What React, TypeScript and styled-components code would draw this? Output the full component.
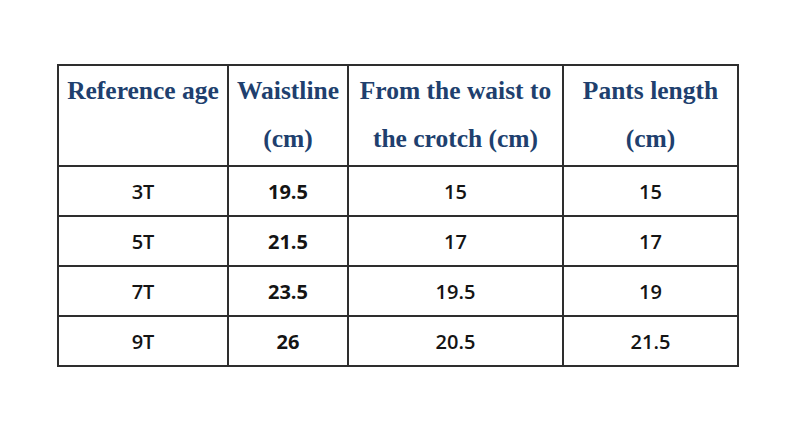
import styled, { createGlobalStyle } from "styled-components";

const GlobalStyle = createGlobalStyle`
  html, body {
    margin: 0;
    padding: 0;
    background: #ffffff;
  }
`;

const Page = styled.div`
  width: 800px;
  height: 423px;
  padding: 64px 0 0 57px;
  box-sizing: border-box;
  background: #ffffff;
`;

const Table = styled.table`
  border-collapse: collapse;
  table-layout: fixed;
  width: 680px;
`;

const HeadCell = styled.th`
  border: 2px solid #2e2e2e;
  height: 98px;
  padding: 1px 0 0;
  vertical-align: top;
  font-family: "Liberation Serif", "Times New Roman", serif;
  font-weight: 700;
  font-size: 25.5px;
  line-height: 48px;
  color: #203f6e;
  text-align: center;
  white-space: nowrap;
`;

const Cell = styled.td<{ $strong?: boolean }>`
  border: 2px solid #2e2e2e;
  height: 48px;
  padding: 0;
  text-align: center;
  vertical-align: middle;
  font-family: "Open Sans", "Noto Sans", sans-serif;
  font-size: 20px;
  font-weight: ${(p) => (p.$strong ? 700 : 600)};
  color: #141414;
`;

const columns = [
  { width: 170, title: ["Reference age"] },
  { width: 120, title: ["Waistline", "(cm)"] },
  { width: 215, title: ["From the waist to", "the crotch (cm)"] },
  { width: 175, title: ["Pants length", "(cm)"] },
];

const rows = [
  ["3T", "19.5", "15", "15"],
  ["5T", "21.5", "17", "17"],
  ["7T", "23.5", "19.5", "19"],
  ["9T", "26", "20.5", "21.5"],
];

const App = () => {
  return (
    <Page>
      <GlobalStyle />
      <Table>
        <colgroup>
          {columns.map((c, i) => (
            <col key={i} style={{ width: c.width }} />
          ))}
        </colgroup>
        <thead>
          <tr>
            {columns.map((c, i) => (
              <HeadCell key={i}>
                {c.title.map((line, j) => (
                  <div key={j}>{line}</div>
                ))}
              </HeadCell>
            ))}
          </tr>
        </thead>
        <tbody>
          {rows.map((r, i) => (
            <tr key={i}>
              {r.map((v, j) => (
                <Cell key={j} $strong={j === 1}>
                  {v}
                </Cell>
              ))}
            </tr>
          ))}
        </tbody>
      </Table>
    </Page>
  );
};

export default App;
